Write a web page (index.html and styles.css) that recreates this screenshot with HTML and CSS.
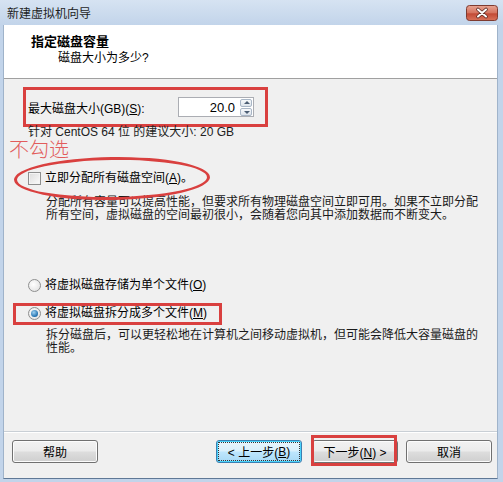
FILE: index.html
```html
<!DOCTYPE html>
<html lang="zh-CN">
<head>
    <meta charset="UTF-8">
    <title>新建虚拟机向导</title>
    <link rel="stylesheet" href="styles.css">
</head>
<body>
    <div class="window">
        <div class="titlebar">
            <span class="title">新建虚拟机向导</span>
            <svg class="close" width="32" height="16" viewBox="0 0 32 16">
                <defs>
                    <linearGradient id="closeGrad" x1="0" y1="0" x2="0" y2="1">
                        <stop offset="0" stop-color="#e8a593"/>
                        <stop offset="0.5" stop-color="#d5735e"/>
                        <stop offset="0.55" stop-color="#c24a35"/>
                        <stop offset="1" stop-color="#d9735a"/>
                    </linearGradient>
                </defs>
                <rect x="0.5" y="0.5" width="31" height="15" rx="3" fill="url(#closeGrad)" stroke="#7e3b30"/>
                <path d="M12 4.5 L20 11.5 M20 4.5 L12 11.5" stroke="#5a2a22" stroke-width="3.6" stroke-linecap="round"/>
                <path d="M12 4.5 L20 11.5 M20 4.5 L12 11.5" stroke="#ffffff" stroke-width="2" stroke-linecap="round"/>
            </svg>
        </div>

        <div class="content">
            <div class="header">
                <div class="heading">指定磁盘容量</div>
                <div class="subheading">磁盘大小为多少?</div>
            </div>

            <div class="body">
                <div class="size-row">
                    <span>最大磁盘大小(GB)(<u>S</u>):</span>
                    <div class="spin-box">
                        <span class="spin-value">20.0</span>
                        <span class="spin-buttons">
                            <span class="spin-btn up"></span>
                            <span class="spin-btn down"></span>
                        </span>
                    </div>
                </div>
                <div class="hint">针对 CentOS 64 位 的建议大小: 20 GB</div>

                <label class="option check-row">
                    <span class="checkbox"></span>
                    <span>立即分配所有磁盘空间(<u>A</u>)。</span>
                </label>
                <p class="desc desc-alloc">分配所有容量可以提高性能，但要求所有物理磁盘空间立即可用。如果不立即分配<br>所有空间，虚拟磁盘的空间最初很小，会随着您向其中添加数据而不断变大。</p>

                <label class="option radio-single">
                    <span class="radio"></span>
                    <span>将虚拟磁盘存储为单个文件(<u>O</u>)</span>
                </label>
                <label class="option radio-split">
                    <span class="radio checked"></span>
                    <span>将虚拟磁盘拆分成多个文件(<u>M</u>)</span>
                </label>
                <p class="desc desc-split">拆分磁盘后，可以更轻松地在计算机之间移动虚拟机，但可能会降低大容量磁盘的<br>性能。</p>

                <!-- annotations drawn on top of the dialog -->
                <div class="note-text">不勾选</div>
                <div class="note-ellipse"></div>
            </div>

            <div class="footer">
                <button class="btn">帮助</button>
                <button class="btn btn-focus btn-back"><span class="focus-ring">&lt; 上一步(<u>B</u>)</span></button>
                <span class="next-wrap">
                    <button class="btn">下一步(<u>N</u>) &gt;</button>
                </span>
                <button class="btn btn-cancel">取消</button>
            </div>
        </div>
    </div>
</body>
</html>
```

FILE: styles.css
```css
body {
    margin: 0;
    font-family: "Liberation Sans", "Noto Sans CJK SC", sans-serif;
    font-size: 12px;
    color: #000;
}
u {
    text-decoration-thickness: 1px;
    text-underline-offset: 1px;
}
.window {
    width: 503px;
    height: 482px;
    box-sizing: border-box;
    display: flex;
    flex-direction: column;
    background: #c2d4ea;
    padding: 0 5px 3px 3px;
}
.titlebar {
    height: 25px;
    display: flex;
    align-items: center;
    justify-content: space-between;
    background: linear-gradient(#d6e3f2, #c2d4ea);
    margin: 0 -5px 0 -3px;
    padding-right: 5px;
    padding-left: 7px;
}
.title {
    font-size: 12px;
    color: #1e1e1e;
}
.close {
    display: block;
}
.content {
    flex: 1;
    display: flex;
    flex-direction: column;
    background: #f0f0f0;
    border-left: 1px solid #9fb3ca;
    border-right: 1px solid #9fb3ca;
    border-bottom: 1px solid #5f7896;
}
.header {
    height: 54px;
    box-sizing: border-box;
    background: #fff;
    border-bottom: 1px solid #a0a0a0;
    padding: 8px 0 0 27px;
}
.heading {
    font-size: 13px;
    font-weight: bold;
    line-height: 17px;
}
.subheading {
    line-height: 16px;
    padding-left: 27px;
}
.body {
    flex: 1;
    position: relative;
    padding-top: 8px;
}
.size-row {
    width: 245px;
    height: 40px;
    box-sizing: border-box;
    margin-left: 19px;
    border: 3px solid #d9403f;
    display: flex;
    align-items: center;
    padding-left: 2px;
}
.spin-box {
    margin-left: auto;
    margin-right: 11px;
    width: 76px;
    height: 20px;
    box-sizing: border-box;
    border: 1px solid #abadb3;
    background: #fff;
    display: flex;
    align-items: center;
    justify-content: flex-end;
}
.spin-value {
    font-size: 13px;
    margin-right: 5px;
}
.spin-buttons {
    display: flex;
    flex-direction: column;
    gap: 1px;
    margin-right: 1px;
}
.spin-btn {
    position: relative;
    width: 12px;
    height: 8px;
    box-sizing: border-box;
    border: 1px solid #a9b6c6;
    border-radius: 2px;
    background: linear-gradient(#f7f9fb, #dde4ec);
}
.spin-btn::after {
    content: "";
    position: absolute;
    left: 3px;
    top: 1px;
    border-left: 3px solid transparent;
    border-right: 3px solid transparent;
}
.spin-btn.up::after {
    border-bottom: 3px solid #4b5d73;
}
.spin-btn.down::after {
    border-top: 3px solid #4b5d73;
    top: 2px;
}
.hint {
    margin: -1px 0 0 24px;
    line-height: 13px;
    color: #222;
}
.option {
    display: flex;
    align-items: center;
    gap: 4px;
    line-height: 14px;
    margin-left: 24px;
}
.check-row {
    margin-top: 32px;
}
.checkbox {
    width: 13px;
    height: 13px;
    box-sizing: border-box;
    border: 1px solid #8e8f8f;
    background: linear-gradient(135deg, #dcdcdc, #fbfbfb);
    box-shadow: inset 0 0 0 1px #f4f4f4;
}
.radio {
    width: 13px;
    height: 13px;
    box-sizing: border-box;
    border: 1px solid #8e8f8f;
    border-radius: 50%;
    background: radial-gradient(circle at 40% 40%, #fff, #dcdcdc);
    position: relative;
}
.radio.checked::after {
    content: "";
    position: absolute;
    left: 2px;
    top: 2px;
    width: 7px;
    height: 7px;
    border-radius: 50%;
    background: radial-gradient(circle at 40% 35%, #9fd2f2, #1f6fae 70%, #0f4e8a);
}
.desc {
    margin: 0 0 0 42px;
    line-height: 13px;
    color: #1a1a1a;
}
.desc-alloc {
    margin-top: 11px;
}
.radio-single {
    margin-top: 56px;
}
.radio-split {
    margin: 11px 0 0 9px;
    width: 209px;
    height: 22px;
    box-sizing: border-box;
    border: 3px solid #d9403f;
    padding: 0 0 2px 12px;
}
.desc-split {
    margin-top: 4px;
}
.note-text {
    position: absolute;
    left: 5px;
    top: 60px;
    font-size: 20px;
    line-height: 20px;
    color: #e25c5c;
    font-family: "Noto Sans CJK SC", sans-serif;
    font-weight: 300;
}
.note-ellipse {
    position: absolute;
    left: 10px;
    top: 78px;
    width: 190px;
    height: 37px;
    border: 3px solid #d9403f;
    border-radius: 50%;
    transform: rotate(-0.8deg);
}
.footer {
    height: 38px;
    border-top: 1px solid #c9cfd5;
    box-shadow: inset 0 1px 0 #fff;
    display: flex;
    align-items: flex-start;
    padding: 8px 5px 0 8px;
}
.btn {
    width: 86px;
    height: 23px;
    box-sizing: border-box;
    border: 1px solid #707070;
    border-radius: 3px;
    background: linear-gradient(#f2f2f2 0%, #ebebeb 48%, #dddddd 52%, #cfcfcf 100%);
    box-shadow: inset 0 0 0 1px #fcfcfc;
    font: inherit;
    color: #000;
    padding: 0;
}
.btn-back {
    margin-left: auto;
}
.btn-focus {
    border-color: #3c7fb1;
    background: linear-gradient(#eaf6fd 0%, #d9f0fc 48%, #bee6fd 52%, #a7d9f5 100%);
    box-shadow: inset 0 0 0 1px #48d3fb;
}
.focus-ring {
    display: flex;
    align-items: center;
    justify-content: center;
    margin: 2px;
    height: 17px;
    outline: 1px dotted #333;
}
.next-wrap {
    position: relative;
    margin-left: 10px;
}
.next-wrap .btn {
    display: block;
}
.next-wrap::after {
    content: "";
    position: absolute;
    left: -1px;
    top: -5px;
    width: 86px;
    height: 31px;
    box-sizing: border-box;
    border: 3px solid #d9403f;
}
.btn-cancel {
    margin-left: 8px;
}
```
